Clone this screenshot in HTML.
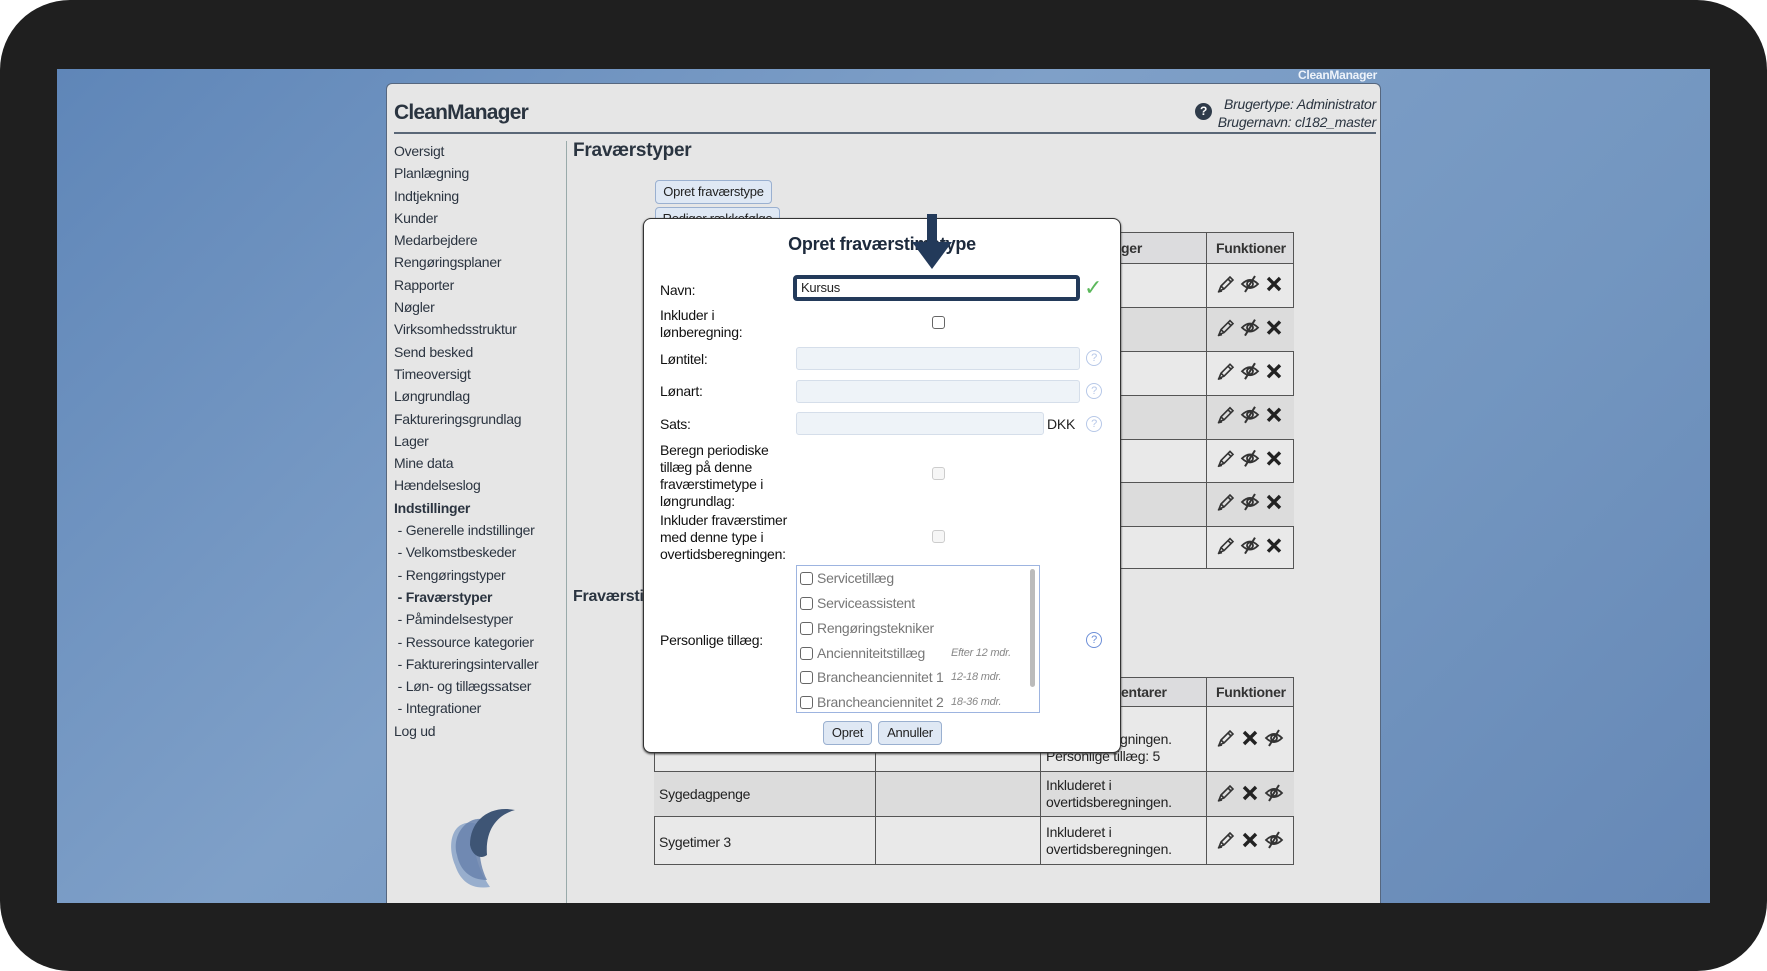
<!DOCTYPE html>
<html><head><meta charset="utf-8"><style>
*{margin:0;padding:0;box-sizing:border-box}
body{width:1767px;height:971px;background:#fff;font-family:"Liberation Sans",Arial,sans-serif;position:relative;overflow:hidden;color:#222;letter-spacing:-0.25px}
.a{position:absolute}
#frame{left:0;top:0;width:1767px;height:971px;background:#1f1f1f;border-radius:70px}
#desk{left:57px;top:69px;width:1653px;height:834px;background:linear-gradient(135deg,#5f86b8 0%,#7fa0c8 40%,#7396c0 70%,#6688b6 100%)}
#win{left:386px;top:83px;width:995px;height:820px;background:#e6e6e6;border:1px solid #56677f;border-bottom:none;border-radius:6px 6px 0 0}
.side{left:394px;font-size:14px;color:#2b3440}
.hd{font-weight:bold;font-size:14px;color:#333}
.lbl{left:660px;font-size:14px;color:#111;line-height:17px}
.inp{background:#eef3f8;border:1px solid #d5deea;border-radius:3px}
.cb{width:13px;height:13px;border:1px solid #666;border-radius:3px;background:#fff}
.cbd{border-color:#ccc;background:#f6f6f6}
.q{width:16px;height:16px;border:1px solid #b7c8e8;border-radius:50%;color:#b7c8e8;font-size:11px;text-align:center;line-height:14px}
.li{left:800px;font-size:14px;color:#777}
.li span.c{display:inline-block;width:13px;height:13px;border:1px solid #666;border-radius:3px;vertical-align:-2px;margin-right:4px;background:#fff}
.li i{font-size:11px;color:#888;position:absolute;left:151px;top:2px;white-space:nowrap}
.btn{background:#dfe8f4;border:1px solid #9ab0d0;border-radius:4px;font-size:13px;color:#222;text-align:center}
</style></head><body>
<svg width="0" height="0" style="position:absolute"><defs>
<g id="pen"><path d="M3 17 L5 12 L14 3 L17 6 L8 15 Z M5 12 L8 15 M12 5 L15 8" fill="none" stroke="#333" stroke-width="1.6"/><path d="M2 18 L6 17" stroke="#333" stroke-width="1.6"/></g>
<g id="eye"><path d="M2 10 Q10 2 18 10 Q10 18 2 10Z" fill="none" stroke="#333" stroke-width="1.8"/><circle cx="10" cy="10" r="3" fill="none" stroke="#333" stroke-width="1.8"/><path d="M15 2 L5 18" stroke="#333" stroke-width="2"/></g>
<g id="x"><path d="M4 4 L16 16 M16 4 L4 16" stroke="#222" stroke-width="3.4"/></g>
</defs></svg>
<div id="frame" class="a"></div>
<div id="desk" class="a"></div>
<div class="a" style="left:1298px;top:68px;font-size:12px;font-weight:bold;color:#eef3fa">CleanManager</div>
<div id="win" class="a"></div>
<div class="a" style="left:394px;top:101px;font-size:21px;font-weight:bold;color:#2a3440;letter-spacing:-0.8px">CleanManager</div>
<div class="a" style="left:1195px;top:103px;width:17px;height:17px;border-radius:50%;background:#2f3b4a;color:#fff;font-size:12px;font-weight:bold;text-align:center;line-height:17px">?</div>
<div class="a" style="left:1200px;top:95px;width:176px;text-align:right;font-size:14px;font-style:italic;color:#2a3440;line-height:18px">Brugertype: Administrator<br>Brugernavn: cl182_master</div>
<div class="a" style="left:394px;top:132px;width:982px;height:2px;background:#5a6777"></div>
<div class="a" style="left:566px;top:141px;width:1px;height:762px;background:#9aa"></div>

<div class="a side" style="top:140px;line-height:22.3px">Oversigt<br>Planlægning<br>Indtjekning<br>Kunder<br>Medarbejdere<br>Rengøringsplaner<br>Rapporter<br>Nøgler<br>Virksomhedsstruktur<br>Send besked<br>Timeoversigt<br>Løngrundlag<br>Faktureringsgrundlag<br>Lager<br>Mine data<br>Hændelseslog<br><b>Indstillinger</b><br>&nbsp;- Generelle indstillinger<br>&nbsp;- Velkomstbeskeder<br>&nbsp;- Rengøringstyper<br>&nbsp;<b>- Fraværstyper</b><br>&nbsp;- Påmindelsestyper<br>&nbsp;- Ressource kategorier<br>&nbsp;- Faktureringsintervaller<br>&nbsp;- Løn- og tillægssatser<br>&nbsp;- Integrationer<br>Log ud</div>

<svg class="a" style="left:435px;top:795px" width="90" height="100" viewBox="0 0 90 100">
<path d="M20 70 C10 45 20 20 45 30 C35 45 40 70 55 92 C35 95 25 85 20 70Z" fill="#8aa3c8" opacity=".85"/>
<path d="M22 60 C15 35 40 15 55 28 C42 40 42 65 52 85 C35 85 25 75 22 60Z" fill="#6883ad" opacity=".85"/>
<path d="M35 50 C35 25 55 10 80 15 C62 20 50 35 52 60 C45 65 37 60 35 50Z" fill="#3e5575"/>
</svg>

<div class="a" style="left:573px;top:140px;font-size:19px;font-weight:bold;color:#2a3440">Fraværstyper</div>
<div class="a btn" style="left:655px;top:180px;width:117px;height:24px;line-height:22px">Opret fraværstype</div>
<div class="a btn" style="left:655px;top:207px;width:125px;height:24px;line-height:22px">Rediger rækkefølge</div>

<div class="a" style="left:654px;top:232px;width:640px;height:337px;border:1px solid #555;background:#e9e9e9"></div>
<div class="a" style="left:654px;top:232px;width:640px;height:32px;background:#dcdcde;border:1px solid #555"></div>
<div class="a hd" style="left:1121px;top:240px">ger</div>
<div class="a hd" style="left:1216px;top:240px">Funktioner</div>
<div class="a" style="left:654px;top:307px;width:640px;height:44px;background:#dcdcdc"></div>
<div class="a" style="left:654px;top:395px;width:640px;height:44px;background:#dcdcdc"></div>
<div class="a" style="left:654px;top:482px;width:640px;height:44px;background:#dcdcdc"></div>
<div class="a" style="left:654px;top:307px;width:640px;height:1px;background:#555"></div>
<div class="a" style="left:654px;top:351px;width:640px;height:1px;background:#555"></div>
<div class="a" style="left:654px;top:395px;width:640px;height:1px;background:#555"></div>
<div class="a" style="left:654px;top:439px;width:640px;height:1px;background:#555"></div>
<div class="a" style="left:654px;top:482px;width:640px;height:1px;background:#555"></div>
<div class="a" style="left:654px;top:526px;width:640px;height:1px;background:#555"></div>
<div class="a" style="left:1206px;top:232px;width:1px;height:337px;background:#555"></div>
<svg class="a" style="left:1216px;top:274px" width="70" height="295">
<g><use href="#pen"/><use href="#eye" x="24"/><use href="#x" x="48"/></g>
<g transform="translate(0,43.6)"><use href="#pen"/><use href="#eye" x="24"/><use href="#x" x="48"/></g>
<g transform="translate(0,87.2)"><use href="#pen"/><use href="#eye" x="24"/><use href="#x" x="48"/></g>
<g transform="translate(0,130.8)"><use href="#pen"/><use href="#eye" x="24"/><use href="#x" x="48"/></g>
<g transform="translate(0,174.4)"><use href="#pen"/><use href="#eye" x="24"/><use href="#x" x="48"/></g>
<g transform="translate(0,218)"><use href="#pen"/><use href="#eye" x="24"/><use href="#x" x="48"/></g>
<g transform="translate(0,261.6)"><use href="#pen"/><use href="#eye" x="24"/><use href="#x" x="48"/></g>
</svg>

<div class="a" style="left:573px;top:588px;font-size:16px;font-weight:bold;color:#2a3440">Fraværstimetyper</div>

<div class="a" style="left:654px;top:677px;width:640px;height:188px;border:1px solid #555;background:#e9e9e9"></div>
<div class="a" style="left:654px;top:677px;width:640px;height:30px;background:#dcdcde;border:1px solid #555"></div>
<div class="a" style="left:654px;top:771px;width:640px;height:46px;background:#dcdcdc;border-top:1px solid #555;border-bottom:1px solid #555"></div>
<div class="a" style="left:875px;top:677px;width:1px;height:188px;background:#555"></div>
<div class="a" style="left:1040px;top:677px;width:1px;height:188px;background:#555"></div>
<div class="a" style="left:1206px;top:677px;width:1px;height:188px;background:#555"></div>
<div class="a hd" style="left:1121px;top:684px">entarer</div>
<div class="a hd" style="left:1216px;top:684px">Funktioner</div>
<div class="a" style="left:1046px;top:714px;width:150px;font-size:14px;line-height:17px">Inkluderet i overtidsberegningen. Personlige tillæg: 5</div>
<div class="a" style="left:659px;top:786px;font-size:14px">Sygedagpenge</div>
<div class="a" style="left:1046px;top:777px;font-size:14px;line-height:17px">Inkluderet i<br>overtidsberegningen.</div>
<div class="a" style="left:659px;top:834px;font-size:14px">Sygetimer 3</div>
<div class="a" style="left:1046px;top:824px;font-size:14px;line-height:17px">Inkluderet i<br>overtidsberegningen.</div>
<svg class="a" style="left:1216px;top:728px" width="70" height="130">
<g><use href="#pen"/><use href="#x" x="24"/><use href="#eye" x="48"/></g>
<g transform="translate(0,55)"><use href="#pen"/><use href="#x" x="24"/><use href="#eye" x="48"/></g>
<g transform="translate(0,102)"><use href="#pen"/><use href="#x" x="24"/><use href="#eye" x="48"/></g>
</svg>

<div class="a" style="left:643px;top:218px;width:478px;height:535px;background:#fff;border:1px solid #333;border-radius:8px;box-shadow:0 1px 2px #333"></div>
<div class="a" style="left:643px;top:234px;width:478px;text-align:center;font-size:18px;font-weight:bold;color:#1d2a3c">Opret fraværstimetype</div>
<svg class="a" style="left:910px;top:214px" width="44" height="56" viewBox="0 0 44 56"><rect x="17" y="0" width="10" height="30" fill="#233a5a"/><path d="M2 28 L42 28 L22 55Z" fill="#233a5a"/></svg>

<div class="a lbl" style="top:282px">Navn:</div>
<div class="a" style="left:793px;top:275px;width:287px;height:26px;border:4px solid #233a5a;border-radius:4px;background:#fff;font-size:13px;padding-left:4px;line-height:18px">Kursus</div>
<div class="a" style="left:1084px;top:275px;font-size:22px;color:#5cb85c">✓</div>

<div class="a lbl" style="top:307px">Inkluder i<br>lønberegning:</div>
<div class="a cb" style="left:932px;top:316px"></div>
<div class="a lbl" style="top:351px">Løntitel:</div>
<div class="a inp" style="left:796px;top:347px;width:284px;height:23px"></div>
<div class="a q" style="left:1086px;top:350px">?</div>
<div class="a lbl" style="top:383px">Lønart:</div>
<div class="a inp" style="left:796px;top:380px;width:284px;height:23px"></div>
<div class="a q" style="left:1086px;top:383px">?</div>
<div class="a lbl" style="top:416px">Sats:</div>
<div class="a inp" style="left:796px;top:412px;width:248px;height:23px"></div>
<div class="a" style="left:1047px;top:416px;font-size:14px">DKK</div>
<div class="a q" style="left:1086px;top:416px">?</div>
<div class="a lbl" style="top:442px">Beregn periodiske<br>tillæg på denne<br>fraværstimetype i<br>løngrundlag:</div>
<div class="a cb cbd" style="left:932px;top:467px"></div>
<div class="a lbl" style="top:512px">Inkluder fraværstimer<br>med denne type i<br>overtidsberegningen:</div>
<div class="a cb cbd" style="left:932px;top:530px"></div>
<div class="a lbl" style="top:632px">Personlige tillæg:</div>
<div class="a q" style="left:1086px;top:632px;border-color:#6d8fd8;color:#6d8fd8">?</div>
<div class="a" style="left:796px;top:565px;width:244px;height:148px;border:1px solid #9db4e0;background:#fff;overflow:hidden"></div>
<div class="a" style="left:1030px;top:569px;width:5px;height:118px;background:#bbb;border-radius:3px"></div>
<div class="a li" style="top:570px"><span class="c"></span>Servicetillæg</div>
<div class="a li" style="top:595px"><span class="c"></span>Serviceassistent</div>
<div class="a li" style="top:620px"><span class="c"></span>Rengøringstekniker</div>
<div class="a li" style="top:645px"><span class="c"></span>Ancienniteitstillæg<i>Efter 12 mdr.</i></div>
<div class="a li" style="top:669px"><span class="c"></span>Brancheanciennitet 1<i>12-18 mdr.</i></div>
<div class="a li" style="top:694px"><span class="c"></span>Brancheanciennitet 2<i>18-36 mdr.</i></div>
<div class="a btn" style="left:823px;top:721px;width:49px;height:24px;line-height:22px">Opret</div>
<div class="a btn" style="left:878px;top:721px;width:64px;height:24px;line-height:22px">Annuller</div>
</body></html>
